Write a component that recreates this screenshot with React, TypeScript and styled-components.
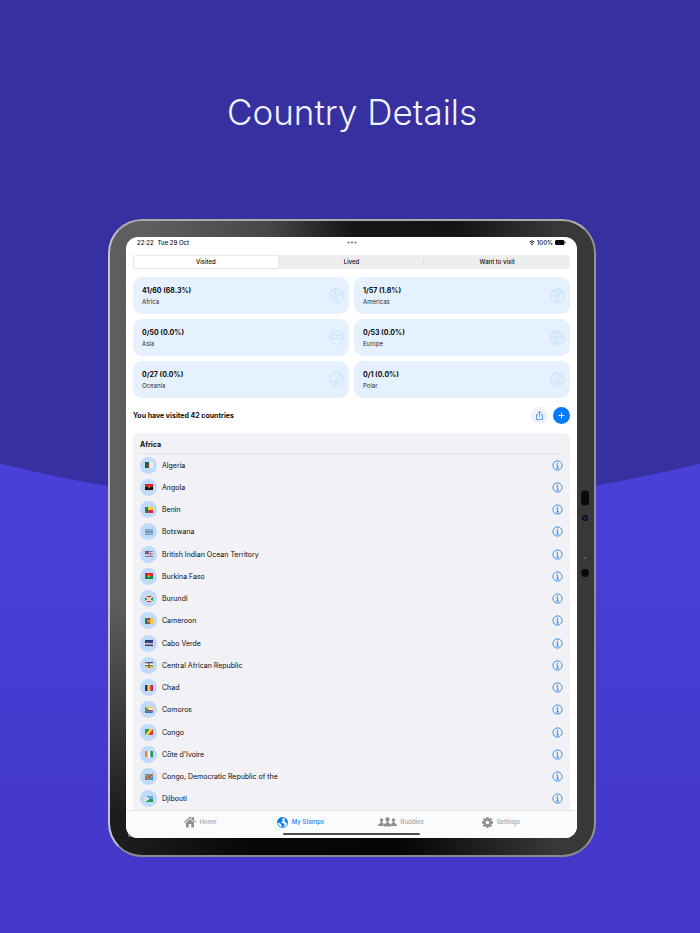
import React, { useState } from 'react';
import styled, { createGlobalStyle } from 'styled-components';

const GlobalStyle = createGlobalStyle`
  * { box-sizing: border-box; }
  body { margin: 0; font-family: Inter, Roboto, sans-serif; color: #0b0b0d; }
  button { font: inherit; color: inherit; border: 0; padding: 0; background: none; cursor: pointer; }
  ul, h1, h2, h3, p { margin: 0; padding: 0; font-weight: inherit; font-size: inherit; }
  ul { list-style: none; }
  svg { display: block; flex: none; }
`;

const Page = styled.main`
  min-height: 100vh;
  padding: 0 104px 76px 108px;
  background:
    radial-gradient(circle 1446px at 50% -939px, #3730a1 calc(100% - 1px), transparent 100%),
    linear-gradient(#4a3fd7 55%, #4338ca 92%);
`;

const Title = styled.h1`
  display: flex;
  align-items: center;
  justify-content: center;
  height: 219px;
  padding-top: 4px;
  font-size: 35px;
  font-weight: 300;
  line-height: 40px;
  color: #f1f3ff;
  white-space: nowrap;
`;

const Device = styled.section`
  position: relative;
  padding: 16px 17px 17px 16px;
  border: 2px solid;
  border-color: #a9aaad #929292 #8a8a8a #c4c4c8;
  border-radius: 34px;
  background:
    linear-gradient(to right, #1f1f1f, #070707 30%, #050505 60%, #383838 92%) bottom / 100% 18px no-repeat,
    linear-gradient(to bottom, transparent 60%, #1c1c1c 94%) left / 18px 100% no-repeat,
    linear-gradient(to right, #5e5e5e 8%, #484848 32%, #161616 50%, #141414 72%, #383838 92%);
`;

const Sensor = styled.span<{ $top: number; $w: number; $h: number; $color?: string }>`
  position: absolute;
  right: 9px;
  top: ${p => p.$top}px;
  width: ${p => p.$w}px;
  height: ${p => p.$h}px;
  border-radius: 8px;
  transform: translate(50%, -50%);
  background: ${p => p.$color || '#090909'};
`;

const Screen = styled.div`
  overflow: hidden;
  border-radius: 12px;
  background: #fff;
`;

const StatusBar = styled.header`
  display: grid;
  grid-template-columns: 1fr auto 1fr;
  align-items: center;
  height: 11px;
  padding: 0 11px;
  font-size: 6px;
  font-weight: 500;
  line-height: 8px;
`;

const StatusGroup = styled.div<{ $end?: boolean }>`
  display: flex;
  align-items: center;
  justify-content: ${p => (p.$end ? 'flex-end' : 'flex-start')};
  gap: ${p => (p.$end ? 2 : 4)}px;
`;

const Content = styled.div`
  padding: 7px 7px 0;
`;

const Segments = styled.div`
  display: grid;
  grid-template-columns: repeat(3, 1fr);
  height: 14px;
  border-radius: 3px;
  background: #eeeeef;
`;

const Segment = styled.button<{ $active: boolean; $divided: boolean }>`
  position: relative;
  border-radius: 3px;
  font-size: 6px;
  font-weight: 500;
  line-height: 8px;
  background: ${p => (p.$active ? '#fff' : 'transparent')};
  box-shadow: ${p => (p.$active ? 'inset 0 0 0 1px #e9e9ea, 0 1px 1px #0000000a' : 'none')};
  &::after {
    content: '';
    display: ${p => (p.$divided ? 'block' : 'none')};
    position: absolute;
    right: 0;
    top: 4px;
    bottom: 4px;
    width: 1px;
    background: #dcdcde;
  }
`;

const Cards = styled.div`
  display: grid;
  grid-template-columns: 1fr 1fr;
  gap: 5px;
  margin-top: 8px;
`;

const Card = styled.article`
  display: flex;
  align-items: center;
  justify-content: space-between;
  height: 37px;
  padding: 0 5px 0 9px;
  border-radius: 9px;
  background: #e5f1ff;
`;

const CardCount = styled.h2`
  font-size: 7px;
  font-weight: 700;
  line-height: 11px;
`;

const CardName = styled.p`
  font-size: 6px;
  line-height: 11px;
  color: #25292e;
`;

const Summary = styled.div`
  display: flex;
  align-items: center;
  gap: 5px;
  height: 35px;
`;

const SummaryText = styled.h2`
  flex: 1;
  font-size: 7px;
  font-weight: 700;
  line-height: 10px;
`;

const RoundButton = styled.button<{ $primary?: boolean }>`
  display: grid;
  place-items: center;
  width: 17px;
  height: 17px;
  border-radius: 50%;
  color: ${p => (p.$primary ? '#fff' : '#3391ef')};
  background: ${p => (p.$primary ? '#047bfe' : '#f0f0f5')};
`;

const Panel = styled.section`
  padding: 0 7px;
  border-radius: 6px 6px 0 0;
  background: #f2f1f6;
`;

const PanelTitle = styled.h2`
  height: 21px;
  padding-top: 7px;
  border-bottom: 1px solid #e2e1e6;
  font-size: 7px;
  font-weight: 700;
  line-height: 10px;
`;

const CountryList = styled.ul`
  display: grid;
  grid-auto-rows: 1fr;
  height: 356px;
`;

const CountryRow = styled.li`
  display: flex;
  align-items: center;
  gap: 5px;
  font-size: 7px;
  line-height: 10px;
`;

const FlagBadge = styled.span`
  display: grid;
  place-items: center;
  width: 17px;
  height: 17px;
  border-radius: 50%;
  background: #c0dafa;
`;

const CountryName = styled.span`
  flex: 1;
  padding-top: 1px;
`;

const InfoButton = styled.button`
  display: block;
  color: #3b90e3;
`;

const TabBar = styled.nav`
  display: grid;
  grid-template-columns: repeat(4, 1fr);
  padding: 0 26px 0 24px;
  height: 23px;
  border-top: 1px solid #e3e3e8;
  background: #fafbfd;
`;

const TabItem = styled.a<{ $active?: boolean }>`
  display: flex;
  align-items: center;
  justify-content: center;
  gap: 4px;
  font-size: 6px;
  font-weight: 500;
  line-height: 8px;
  text-decoration: none;
  color: ${p => (p.$active ? '#1584f5' : '#a3a3a6')};
`;

const HomeStrip = styled.div`
  display: flex;
  justify-content: center;
  height: 5px;
  background: #fafbfd;
  &::after {
    content: '';
    width: 137px;
    height: 2px;
    border-radius: 1px;
    background: #4c4d50;
  }
`;

const globes: Record<string, string> = {
  Africa: 'M3 6 6 4l4 1 1 3-2 2 3 1 2 4-2 5-2-2-1-5-4-1-2-3M13 2l1 4 4 1 3 2-2 3-3-1-3-2',
  Americas: 'M3 8l4-4 4 1-1 4-3 2 1 3-4-2M11 4l5-1 3 4-3 3-2 7-4 4-1-6 2-4 5-3',
  Asia: 'M2 9l4-3 5 3 5-2 5 3M2 12l3-1 3 6 4-6 4 5 2-4 4 1',
  Europe: 'M3 6 7 4l5 2-1 3-4 1 2 3 4 1 1 5-3 3-2-6-4-3-2-4M14 3l1 4 5 2-1 4-4-2-3-1',
  Oceania: 'M3 16l4-2 4 2 4-3-3-3 4-5 2 5 4-1M6 19l4-3 4 3 4-5',
  Polar: 'M3 15l5-3 4-2 1-5 5 1 1 4-5 2-2 4 6 1M4 18l6-2 4 4 4-4',
};

const Globe = ({ region }: { region: string }) => (
  <svg width="15" height="15" viewBox="0 0 24 24" fill="none" stroke="#c3dff8" strokeWidth="1.5" strokeLinejoin="round" aria-hidden="true">
    <circle cx="12" cy="12" r="11" />
    <path d={globes[region]} />
  </svg>
);

const InfoIcon = () => (
  <svg width="11" height="11" viewBox="0 0 22 22" fill="none" stroke="currentColor" strokeWidth="2" aria-hidden="true">
    <circle cx="11" cy="11" r="9.2" />
    <path d="M8.5 9.5h2.8V16M8.2 16h6" />
    <circle cx="11" cy="6.4" r="1.4" fill="currentColor" stroke="none" />
  </svg>
);

const V = ({ c }: { c: string[] }) => (
  <>{c.map((f, i) => <rect key={i} x={(i * 24) / c.length} width={24 / c.length} height="16" fill={f} />)}</>
);
const H = ({ c }: { c: string[] }) => (
  <>{c.map((f, i) => <rect key={i} y={(i * 16) / c.length} width="24" height={16 / c.length} fill={f} />)}</>
);
const star = 'M12 4l1.2 2.8 3 .2-2.3 2 .8 3L12 10.400l-2.700 1.600.800-3-2.300-2 3-.200z';

const countries: [string, React.ReactNode][] = [
  ['Algeria', <><V c={['#16683a', '#f1f1f1']} /><path d="M15 5a4 4 0 1 0 0 6 3 3 0 1 1 0-6z" fill="#d33844" /></>],
  ['Angola', <><H c={['#d3202f', '#151515']} /><path d="M9 5q7 0 5 6M9 11l6-2" stroke="#edb72f" strokeWidth="1.500" fill="none" /></>],
  ['Benin', <><H c={['#f9d02f', '#df2935']} /><rect width="9" height="16" fill="#16854b" /></>],
  ['Botswana', <><H c={['#74aacd', '#74aacd', '#202b33', '#74aacd', '#74aacd']} /><path d="M0 6h24M0 10h24" stroke="#eef3f6" /></>],
  ['British Indian Ocean Territory', <><H c={['#6d7dab', '#e3e5ed', '#6d7dab', '#e3e5ed', '#6d7dab']} /><rect width="11" height="8" fill="#4a5289" /><path d="M0 4h11M5.500 0v8M17 3v11" stroke="#cc5060" strokeWidth="2" /></>],
  ['Burkina Faso', <><H c={['#dc2937', '#16854b']} /><path d={star} fill="#f6cf38" /></>],
  ['Burundi', <><rect width="24" height="16" fill="#25994b" /><path d="M0 0h24L0 16h24z" fill="#d33341" /><path d="M0 0l24 16M24 0L0 16" stroke="#fff" strokeWidth="3" /><circle cx="12" cy="8" r="5" fill="#fff" /><circle cx="12" cy="8" r="2" fill="#d33341" /></>],
  ['Cameroon', <><V c={['#16815a', '#d42736', '#f4c834']} /><path d={star} fill="#f4c834" /></>],
  ['Cabo Verde', <><rect width="24" height="16" fill="#263f8d" /><path d="M0 10h24" stroke="#fff" strokeWidth="4" /><path d="M0 10h24" stroke="#cd3342" strokeWidth="1.500" /><circle cx="9" cy="9" r="3" fill="none" stroke="#e8c345" /></>],
  ['Central African Republic', <><H c={['#234894', '#fff', '#309647', '#f2cb39']} /><path d="M12 0v16" stroke="#cf2d39" strokeWidth="4" /><circle cx="5" cy="2" r="1.500" fill="#f2cb39" /></>],
  ['Chad', <V c={['#1b3680', '#f6c52f', '#cb2636']} />],
  ['Comoros', <><H c={['#f2cc3a', '#f7f7f7', '#cc3245', '#3974b8']} /><path d="M0 0l13 8-13 8z" fill="#318c4b" /><path d="M6 5a3 3 0 1 0 0 6" fill="none" stroke="#fff" /></>],
  ['Congo', <><rect width="24" height="16" fill="#2c9849" /><path d="M24 0v16H0z" fill="#d93039" /><path d="M14 0h10L10 16H0z" fill="#f6d440" /></>],
  ["Côte d'Ivoire", <V c={['#ed8333', '#f7f7f7', '#26925a']} />],
  ['Congo, Democratic Republic of the', <><rect width="24" height="16" fill="#3a91cf" /><path d="M0 16L24 0" stroke="#f2d044" strokeWidth="7" /><path d="M0 16L24 0" stroke="#cd3343" strokeWidth="4" /><circle cx="4" cy="4" r="2" fill="#f2d044" /></>],
  ['Djibouti', <><H c={['#62a9dc', '#2c994d']} /><path d="M0 0l14 8-14 8z" fill="#f8f8f8" /><circle cx="4" cy="8" r="1.500" fill="#d33341" /></>],
];

const regions = [
  ['Africa', '41/60 (68.3%)'],
  ['Americas', '1/57 (1.8%)'],
  ['Asia', '0/50 (0.0%)'],
  ['Europe', '0/53 (0.0%)'],
  ['Oceania', '0/27 (0.0%)'],
  ['Polar', '0/1 (0.0%)'],
];

const segments = ['Visited', 'Lived', 'Want to visit'];

const HomeIcon = () => (
  <svg width="12" height="12" viewBox="0 0 24 24" fill="#8f8f93" aria-hidden="true">
    <path d="M12 1L0 11.500l1.500 1.700L12 4l10.500 9.200 1.500-1.700-4-3.500V2h-3.500v3z" />
    <path d="M4 13l8-7 8 7v10h-5.500v-7h-5v7H4z" />
  </svg>
);

const StampsIcon = () => (
  <svg width="11" height="11" viewBox="0 0 24 24" aria-hidden="true">
    <circle cx="12" cy="12" r="10.800" fill="#fff" stroke="#087cf6" strokeWidth="2" />
    <path d="M1 11C1 5 6 1 11 1l3 2-3 3 2 3-4 2 1 2 5 1 2 3-3 4-1 2-3-3-1-4-4-3zM16 2c4 1 7 5 7 10l-3 2-2-4-3-2 3-2z" fill="#087cf6" />
  </svg>
);

const BuddiesIcon = () => (
  <svg width="19" height="10" viewBox="0 0 38 20" fill="#8f8f93" aria-hidden="true">
    <circle cx="7" cy="6" r="3.500" />
    <circle cx="19" cy="4.500" r="4.200" />
    <circle cx="31" cy="6" r="3.500" />
    <path d="M0 18c0-4 2-5 5-6v-3h4v3l3 2-2 4zM38 18c0-4-2-5-5-6v-3h-4v3l-3 2 2 4zM11 19c0-5 2-6 6-7V8h4v4c4 1 6 2 6 7z" />
  </svg>
);

const SettingsIcon = () => (
  <svg width="11" height="11" viewBox="0 0 24 24" aria-hidden="true">
    <g stroke="#8f8f93" strokeWidth="5">
      <path d="M12 0v24M0 12h24M3.500 3.500l17 17M20.500 3.500l-17 17" />
    </g>
    <circle cx="12" cy="12" r="6.500" fill="#fafbfd" stroke="#8f8f93" strokeWidth="5" />
  </svg>
);

export default function App() {
  const [active, setActive] = useState('Visited');
  return (
    <>
      <GlobalStyle />
      <Page>
        <Title>Country Details</Title>
        <Device>
          <Sensor $top={277} $w={8} $h={15} />
          <Sensor $top={297} $w={6} $h={6} $color="radial-gradient(#242458 20%, #090909 60%)" />
          <Sensor $top={337} $w={2} $h={2} $color="#686868" />
          <Sensor $top={352} $w={8} $h={8} />
          <Screen>
            <StatusBar>
              <StatusGroup><span>22:22</span><span>Tue 29 Oct</span></StatusGroup>
              <svg width="10" height="3" viewBox="0 0 10 3" fill="#77777a" aria-hidden="true">
                <circle cx="1.500" cy="1.500" r="1.100" /><circle cx="5" cy="1.500" r="1.100" /><circle cx="8.500" cy="1.500" r="1.100" />
              </svg>
              <StatusGroup $end>
                <svg width="6" height="5" viewBox="0 0 12 10" fill="none" stroke="#111" strokeWidth="1.800" aria-hidden="true">
                  <path d="M1 4q5-5 10 0M3 6.500q3-3 6 0" /><circle cx="6" cy="8.500" r=".7" />
                </svg>
                <span>100%</span>
                <svg width="11" height="5" viewBox="0 0 22 10" fill="#050505" aria-hidden="true">
                  <rect width="19" height="10" rx="3" /><rect x="20" y="3" width="2" height="4" rx="1" fill="#999" />
                </svg>
              </StatusGroup>
            </StatusBar>
            <Content>
              <Segments role="tablist">
                {segments.map((s, i) => (
                  <Segment key={s} type="button" role="tab" aria-selected={s === active} $active={s === active} $divided={i === 1} onClick={() => setActive(s)}>
                    {s}
                  </Segment>
                ))}
              </Segments>
              <Cards>
                {regions.map(([name, count]) => (
                  <Card key={name}>
                    <div><CardCount>{count}</CardCount><CardName>{name}</CardName></div>
                    <Globe region={name} />
                  </Card>
                ))}
              </Cards>
              <Summary>
                <SummaryText>You have visited 42 countries</SummaryText>
                <RoundButton type="button" aria-label="Share">
                  <svg width="9" height="9" viewBox="0 0 18 18" fill="none" stroke="currentColor" strokeWidth="1.600" aria-hidden="true">
                    <path d="M6 7H3v10h12V7h-3M9 12V1M6 4l3-3 3 3" />
                  </svg>
                </RoundButton>
                <RoundButton type="button" aria-label="Add country" $primary>
                  <svg width="7" height="7" viewBox="0 0 14 14" stroke="currentColor" strokeWidth="1.800" aria-hidden="true">
                    <path d="M7 1v12M1 7h12" />
                  </svg>
                </RoundButton>
              </Summary>
              <Panel>
                <PanelTitle>Africa</PanelTitle>
                <CountryList>
                  {countries.map(([name, flag]) => (
                    <CountryRow key={name}>
                      <FlagBadge>
                        <svg width="8" height="6" viewBox="0 0 24 16" preserveAspectRatio="none" aria-hidden="true">{flag}</svg>
                      </FlagBadge>
                      <CountryName>{name}</CountryName>
                      <InfoButton type="button" aria-label={`About ${name}`}><InfoIcon /></InfoButton>
                    </CountryRow>
                  ))}
                </CountryList>
              </Panel>
            </Content>
            <TabBar>
              <TabItem href="#home"><HomeIcon />Home</TabItem>
              <TabItem href="#stamps" $active><StampsIcon />My Stamps</TabItem>
              <TabItem href="#buddies"><BuddiesIcon />Buddies</TabItem>
              <TabItem href="#settings"><SettingsIcon />Settings</TabItem>
            </TabBar>
            <HomeStrip />
          </Screen>
        </Device>
      </Page>
    </>
  );
}
